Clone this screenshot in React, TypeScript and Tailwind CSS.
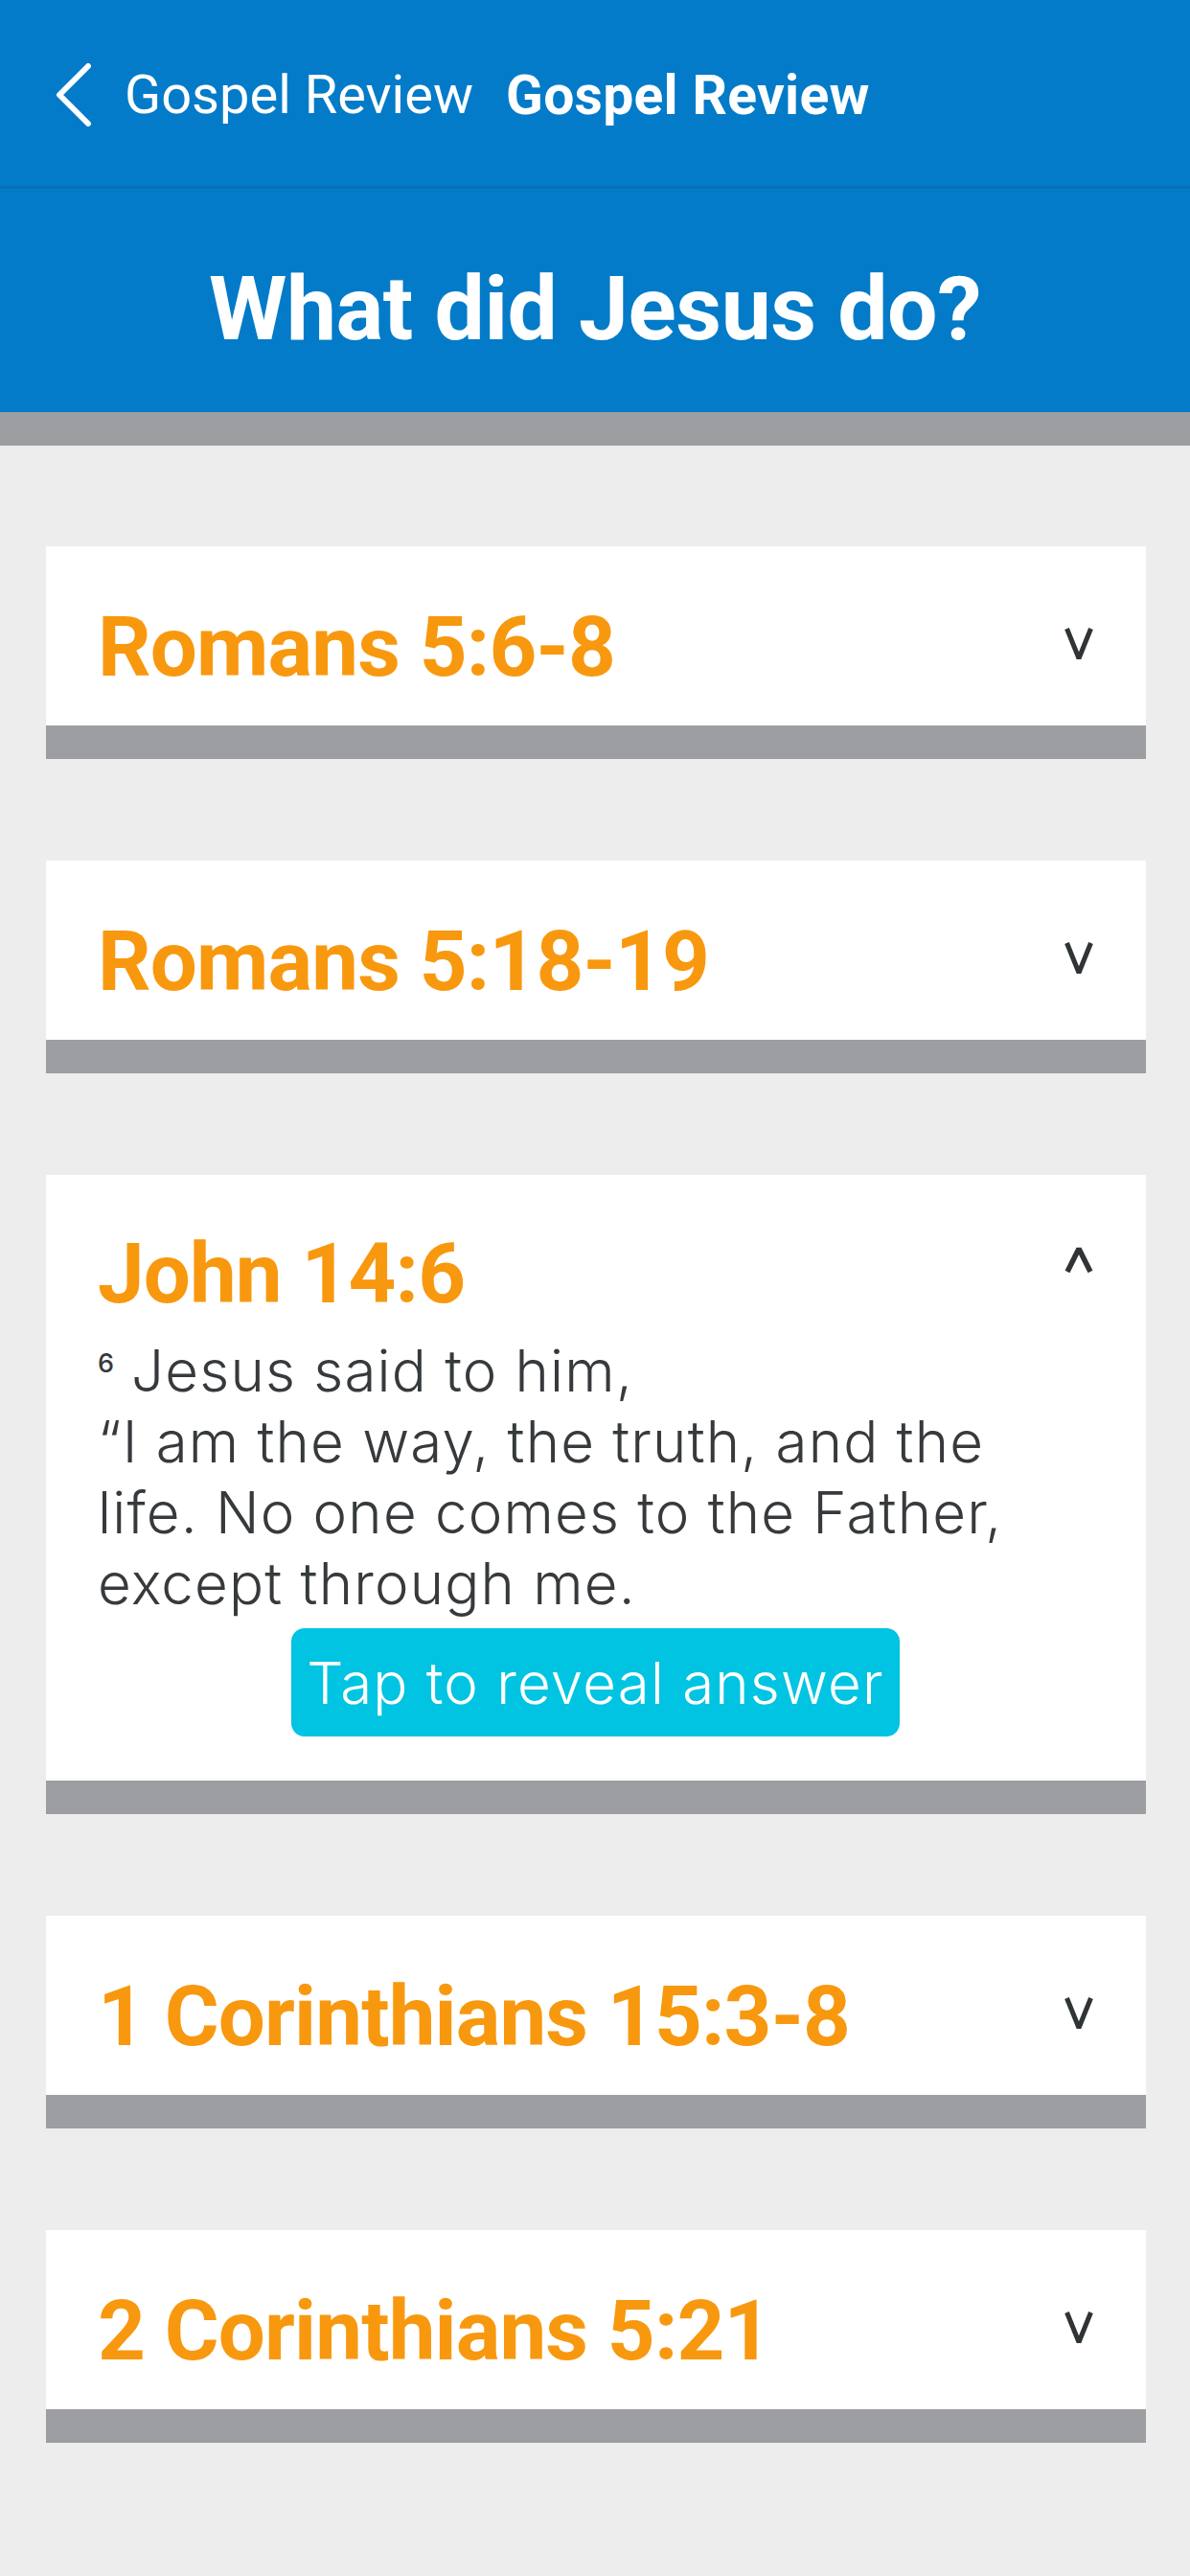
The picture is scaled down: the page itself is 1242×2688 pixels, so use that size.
import React from "react";

const cards = [
  { title: "Romans 5:6-8", open: false },
  { title: "Romans 5:18-19", open: false },
  { title: "John 14:6", open: true },
  { title: "1 Corinthians 15:3-8", open: false },
  { title: "2 Corinthians 5:21", open: false },
];

function ChevronDown() {
  return (
    <svg width="30" height="34" viewBox="0 0 30 34" className="mb-[6px] shrink-0">
      <polyline points="2.5,1 15,32 27.5,1" fill="none" stroke="#2f3436" strokeWidth="5" strokeLinejoin="bevel" />
    </svg>
  );
}

function ChevronUp() {
  return (
    <svg width="30" height="27" viewBox="0 0 30 27" className="mt-[15px] shrink-0">
      <polyline points="3,26 15,2 27,26" fill="none" stroke="#2f3436" strokeWidth="5.5" strokeLinejoin="bevel" />
    </svg>
  );
}

function Card({ title, open }: { title: string; open: boolean }) {
  if (!open) {
    return (
      <div className="ml-[48px] mr-[46px] bg-white border-b-[35px] border-[#9c9ea2]">
        <div className="flex items-center justify-between pl-[54px] pr-[55px] pt-[62px] pb-[39px]">
          <div className="text-[87px] leading-[86px] font-bold tracking-[-0.01em] text-[#f8980f]">{title}</div>
          <ChevronDown />
        </div>
      </div>
    );
  }
  return (
    <div className="ml-[48px] mr-[46px] bg-white border-b-[35px] border-[#9c9ea2]">
      <div className="pl-[54px] pr-[55px] pt-[60px] pb-[46px]">
        <div className="flex items-start justify-between">
          <div className="text-[87px] leading-[86px] font-bold tracking-[-0.01em] text-[#f8980f]">{title}</div>
          <ChevronUp />
        </div>
        <div className="mt-[21px] font-[family-name:Inter,Roboto,sans-serif] text-[60px] leading-[74px] font-light tracking-[0.02em] text-[#373a3d] whitespace-nowrap">
          <span className="text-[27px] leading-none align-[20px] font-medium tracking-normal">6</span> Jesus said to him,
          <br />
          “I am the way, the truth, and the
          <br />
          life. No one comes to the Father,
          <br />
          except through me.
        </div>
        <div className="mt-[10px] flex justify-center">
          <div className="w-[635px] h-[113px] rounded-[14px] bg-[#00c4e1] flex items-center justify-center text-white font-[family-name:Inter,Roboto,sans-serif] text-[60px] font-light tracking-[0.02em] leading-none">
            Tap to reveal answer
          </div>
        </div>
      </div>
    </div>
  );
}

export default function App() {
  return (
    <div className="min-h-screen w-full bg-[#ecedec] font-[family-name:Roboto,'Liberation_Sans',sans-serif] pb-[135px]">
      <div className="h-[197px] bg-[#047bc8] border-b-[3px] border-[#0a70b6] flex items-center pl-[55px] pt-[4px]">
        <svg width="42" height="66" viewBox="0 0 42 66" className="shrink-0">
          <polyline points="37,3 7,33 37,63" fill="none" stroke="white" strokeWidth="6" strokeLinecap="round" strokeLinejoin="round" />
        </svg>
        <span className="ml-[33px] text-[56px] text-white leading-none">Gospel Review</span>
        <span className="ml-[34px] text-[57px] text-white font-bold leading-none tracking-[0.005em]">Gospel Review</span>
      </div>
      <div className="bg-[#047bc8] pt-[80px] pb-[61px] text-center text-white text-[93px] leading-[92px] font-bold tracking-[-0.005em]">
        What did Jesus do?
      </div>
      <div className="h-[35px] bg-[#9c9ea2]" />
      <div className="mt-[105px] flex flex-col gap-[106px]">
        {cards.map((c) => (
          <Card key={c.title} title={c.title} open={c.open} />
        ))}
      </div>
    </div>
  );
}
